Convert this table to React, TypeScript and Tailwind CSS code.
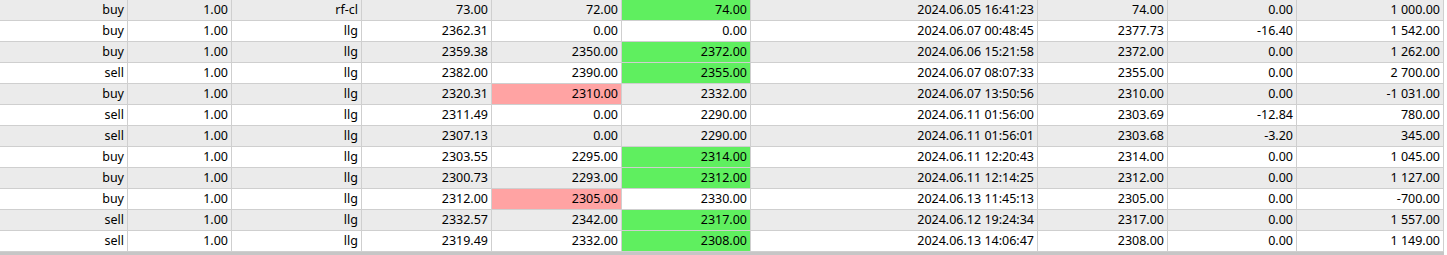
import React from 'react';

type Trade = {
  type: string;
  volume: string;
  symbol: string;
  price: string;
  sl: string;
  tp: string;
  time: string;
  closePrice: string;
  swap: string;
  profit: string;
  hit?: 'sl' | 'tp';
};

const trades: Trade[] = [
  { type: 'buy', volume: '1.00', symbol: 'rf-cl', price: '73.00', sl: '72.00', tp: '74.00', time: '2024.06.05 16:41:23', closePrice: '74.00', swap: '0.00', profit: '1 000.00', hit: 'tp' },
  { type: 'buy', volume: '1.00', symbol: 'llg', price: '2362.31', sl: '0.00', tp: '0.00', time: '2024.06.07 00:48:45', closePrice: '2377.73', swap: '-16.40', profit: '1 542.00' },
  { type: 'buy', volume: '1.00', symbol: 'llg', price: '2359.38', sl: '2350.00', tp: '2372.00', time: '2024.06.06 15:21:58', closePrice: '2372.00', swap: '0.00', profit: '1 262.00', hit: 'tp' },
  { type: 'sell', volume: '1.00', symbol: 'llg', price: '2382.00', sl: '2390.00', tp: '2355.00', time: '2024.06.07 08:07:33', closePrice: '2355.00', swap: '0.00', profit: '2 700.00', hit: 'tp' },
  { type: 'buy', volume: '1.00', symbol: 'llg', price: '2320.31', sl: '2310.00', tp: '2332.00', time: '2024.06.07 13:50:56', closePrice: '2310.00', swap: '0.00', profit: '-1 031.00', hit: 'sl' },
  { type: 'sell', volume: '1.00', symbol: 'llg', price: '2311.49', sl: '0.00', tp: '2290.00', time: '2024.06.11 01:56:00', closePrice: '2303.69', swap: '-12.84', profit: '780.00' },
  { type: 'sell', volume: '1.00', symbol: 'llg', price: '2307.13', sl: '0.00', tp: '2290.00', time: '2024.06.11 01:56:01', closePrice: '2303.68', swap: '-3.20', profit: '345.00' },
  { type: 'buy', volume: '1.00', symbol: 'llg', price: '2303.55', sl: '2295.00', tp: '2314.00', time: '2024.06.11 12:20:43', closePrice: '2314.00', swap: '0.00', profit: '1 045.00', hit: 'tp' },
  { type: 'buy', volume: '1.00', symbol: 'llg', price: '2300.73', sl: '2293.00', tp: '2312.00', time: '2024.06.11 12:14:25', closePrice: '2312.00', swap: '0.00', profit: '1 127.00', hit: 'tp' },
  { type: 'buy', volume: '1.00', symbol: 'llg', price: '2312.00', sl: '2305.00', tp: '2330.00', time: '2024.06.13 11:45:13', closePrice: '2305.00', swap: '0.00', profit: '-700.00', hit: 'sl' },
  { type: 'sell', volume: '1.00', symbol: 'llg', price: '2332.57', sl: '2342.00', tp: '2317.00', time: '2024.06.12 19:24:34', closePrice: '2317.00', swap: '0.00', profit: '1 557.00', hit: 'tp' },
  { type: 'sell', volume: '1.00', symbol: 'llg', price: '2319.49', sl: '2332.00', tp: '2308.00', time: '2024.06.13 14:06:47', closePrice: '2308.00', swap: '0.00', profit: '1 149.00', hit: 'tp' },
];

function Cell({ children, className = '' }: { children: React.ReactNode; className?: string }) {
  return (
    <div className={`flex items-center justify-end pr-[3px] border-r border-[#cfcfcf] whitespace-nowrap overflow-hidden ${className}`}>
      {children}
    </div>
  );
}

export default function App() {
  return (
    <div className="w-[1447px] h-[255px] bg-white overflow-hidden text-[12.5px] leading-none text-black font-['Noto_Sans','Open_Sans',sans-serif]">
      <div className="w-[1444px]">
        {trades.map((t, i) => (
          <div
            key={i}
            className={`grid grid-cols-[128px_104px_130px_130px_130px_129px_287px_130px_129px_147px] h-[21px] border-b border-[#cfcfcf] ${i % 2 === 0 ? 'bg-[#ebebeb]' : 'bg-white'}`}
          >
            <Cell>{t.type}</Cell>
            <Cell>{t.volume}</Cell>
            <Cell>{t.symbol}</Cell>
            <Cell>{t.price}</Cell>
            <Cell className={t.hit === 'sl' ? 'bg-[#ffa3a3]' : ''}>{t.sl}</Cell>
            <Cell className={t.hit === 'tp' ? 'bg-[#5fef5f]' : ''}>{t.tp}</Cell>
            <Cell>{t.time}</Cell>
            <Cell>{t.closePrice}</Cell>
            <Cell>{t.swap}</Cell>
            <Cell>{t.profit}</Cell>
          </div>
        ))}
        <div className="h-[3px] bg-[#c6c6c6]" />
      </div>
    </div>
  );
}
